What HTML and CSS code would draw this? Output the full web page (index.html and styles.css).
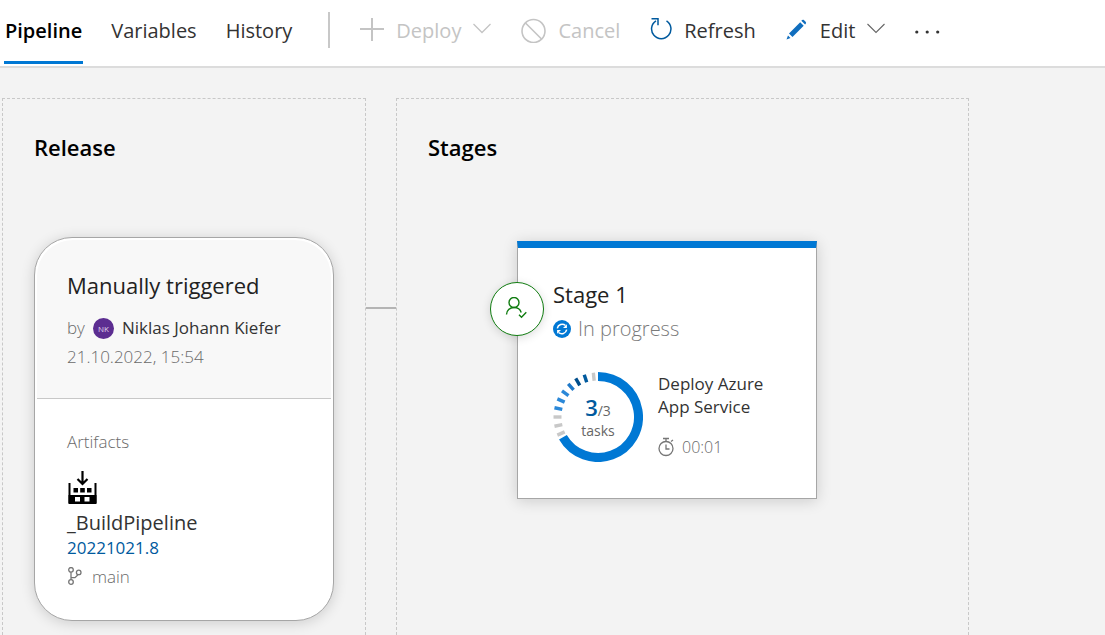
FILE: index.html
```html
<!DOCTYPE html>
<html lang="en">
<head>
<meta charset="utf-8">
<title>Release pipeline</title>
<link rel="stylesheet" href="styles.css">
</head>
<body>
<header class="toolbar">
  <nav class="tabs">
    <a class="tab tab-active" href="#pipeline">Pipeline</a>
    <a class="tab" href="#variables">Variables</a>
    <a class="tab" href="#history">History</a>
  </nav>
  <div class="actions">
    <button class="action" type="button" disabled>
      <svg width="24" height="24" viewBox="0 0 24 24"><path d="M12 -1v24M0 11h24" stroke-width="2"/></svg>
      <span>Deploy</span>
      <svg width="18" height="24" viewBox="0 0 18 24"><path d="M.5 6 9 14.500 17.500 6" stroke-width="1.300"/></svg>
    </button>
    <button class="action" type="button" disabled>
      <svg width="25" height="26" viewBox="0 0 25 26"><circle cx="12.500" cy="14" r="11.500" stroke-width="1.600"/><path d="m4.500 6 16 16" stroke-width="1.600"/></svg>
      <span>Cancel</span>
    </button>
    <button class="action" type="button">
      <svg class="blue" width="22" height="24" viewBox="0 0 22 24"><path d="M6 2.800A9.700 9.700 0 1 0 16.500 2.800M1.500 .8H8v6.500" stroke-width="1.500"/></svg>
      <span>Refresh</span>
    </button>
    <button class="action" type="button">
      <svg class="blue-fill" width="22" height="22" viewBox="0 0 22 22"><path d="m.5 20.500 1.500-4 2.500 2.500zM3 14.500 14.200 3.300l3.500 3.500L6.500 18zM15.300 1.800c1-1 1.800-1.300 2.800-.5l1.500 1.500c.8.900.6 1.800-.5 2.800z"/></svg>
      <span>Edit</span>
      <svg class="thin" width="18" height="24" viewBox="0 0 18 24"><path d="M.5 6 9 14.500 17.500 6" stroke-width="1.100"/></svg>
    </button>
    <button class="action" type="button" aria-label="More actions">
      <svg class="dots" width="25" height="24" viewBox="0 0 25 24"><circle cx="1.800" cy="14" r="1.600"/><circle cx="12.200" cy="14" r="1.600"/><circle cx="22.700" cy="14" r="1.600"/></svg>
    </button>
  </div>
</header>
<main class="canvas">
  <section class="lane lane-release">
    <h2 class="lane-title">Release</h2>
    <article class="release-card">
      <div class="trigger">
        <h3 class="card-title">Manually triggered</h3>
        <p class="author"><span class="muted">by</span><span class="avatar">NK</span><span>Niklas Johann Kiefer</span></p>
        <p class="muted date">21.10.2022, 15:54</p>
      </div>
      <div class="artifacts">
        <p class="muted">Artifacts</p>
        <svg class="build-icon" width="30" height="34" viewBox="0 0 30 34">
          <path d="M2.500 12v20M28.500 12v20" stroke="#000" stroke-width="2"/>
          <path d="M15.500 0v13M10.500 8l5 5 5-5" fill="none" stroke="#000" stroke-width="2.200"/>
          <path d="M6.500 17H11v4.500H6.500zM13.200 17h4.600v4.500h-4.600zM20 17h4.500v4.500H20z"/>
          <path fill-rule="evenodd" d="M1.500 24h28v9h-28zM8 26v4.500h5V26zM17.500 26v4.500h5V26z"/>
        </svg>
        <p class="artifact-name">_BuildPipeline</p>
        <a class="build-link" href="#build">20221021.8</a>
        <p class="muted branch">
          <svg width="16" height="20" viewBox="0 0 16 20" fill="none" stroke="#767676" stroke-width="1.300"><circle cx="4" cy="2.800" r="2.300"/><circle cx="4" cy="15" r="2.300"/><circle cx="11.700" cy="5.400" r="2.300"/><path d="M4 5.200v7.500M4 10.700h4l3-3"/></svg>
          <span>main</span>
        </p>
      </div>
    </article>
  </section>
  <div class="connector"></div>
  <section class="lane lane-stages">
    <h2 class="lane-title">Stages</h2>
    <article class="stage-card">
      <button class="approval" type="button" aria-label="Pre-deployment approvals">
        <svg width="24" height="24" viewBox="0 0 24 24" fill="none" stroke="#107c10" stroke-width="1.400"><circle cx="9" cy="5.500" r="5"/><path d="M1.500 17.500c0-4.200 3.300-7 7.500-7 3.400 0 6.300 1.900 7.200 5M14 17.800l2.500 2.500 4.800-5"/></svg>
      </button>
      <h3 class="card-title">Stage 1</h3>
      <p class="status">
        <svg width="18" height="18" viewBox="0 0 18 18"><circle cx="9" cy="9" r="9" fill="#0078d4"/><path d="M4.300 8.300a5 5 0 0 1 8.200-2.800M13.700 9.700a5 5 0 0 1-8.200 2.800" fill="none" stroke="#fff" stroke-width="1.500"/><path d="M13.900 4.200v3.900H10zM4.100 13.800V9.900H8z" fill="#fff"/></svg>
        <span>In progress</span>
      </p>
      <div class="progress-row">
        <div class="ring">
          <svg class="ring-art" width="90" height="90" viewBox="-45 -45 90 90" fill="none" stroke="#c8c8c8" stroke-width="3.400">
            <path d="M0-40.500A40.500 40.500 0 1 1-35.070 20.250" stroke="#0078d4" stroke-width="9"/>
            <path d="M0-36.500v-8" transform="rotate(246)"/>
            <path d="M0-36.500v-8" transform="rotate(258)"/>
            <path d="M0-36.500v-8" transform="rotate(270)"/>
            <path d="M0-36.500v-8" transform="rotate(282)" stroke="#2b88d8"/>
            <path d="M0-36.500v-8" transform="rotate(294)" stroke="#2b88d8"/>
            <path d="M0-36.500v-8" transform="rotate(306)" stroke="#2b88d8"/>
            <path d="M0-36.500v-8" transform="rotate(318)" stroke="#1e78c8"/>
            <path d="M0-36.500v-8" transform="rotate(330)" stroke="#004e8c"/>
            <path d="M0-36.500v-8" transform="rotate(342)" stroke="#005a9e"/>
            <path d="M0-36.500v-8" transform="rotate(354)"/>
          </svg>
          <p class="count"><strong>3</strong>/3</p>
          <p class="count-label">tasks</p>
        </div>
        <div class="task">
          <p class="task-name">Deploy Azure App Service</p>
          <p class="muted elapsed">
            <svg width="17" height="20" viewBox="0 0 17 20" fill="none" stroke="#767676" stroke-width="1.300"><circle cx="8" cy="11.500" r="7"/><path d="M5 1.500h6M8 1.500v3M13 4.500l2-1.500M8 7.500V12h3.500"/></svg>
            <span>00:01</span>
          </p>
        </div>
      </div>
    </article>
  </section>
</main>
</body>
</html>
```
FILE: styles.css
```css
* { box-sizing: border-box; }

body {
  margin: 0;
  min-height: 100vh;
  display: flex;
  flex-direction: column;
  background: #f3f3f3;
  color: #333;
  font-family: "Open Sans", "Noto Sans", sans-serif;
  font-size: 17px;
  line-height: 24px;
}

h2, h3, p { margin: 0; }

button {
  font: inherit;
  color: inherit;
  background: none;
  border: 0;
  padding: 0;
}

a { text-decoration: none; }

.toolbar {
  display: flex;
  height: 68px;
  background: #fff;
  border-bottom: 2px solid #dcdcdc;
  font-size: 20px;
}

.tabs {
  display: flex;
  gap: 27px;
  padding-left: 4px;
}

.tab {
  height: 64px;
  padding: 0 1px;
  line-height: 62px;
  color: #333;
}

.tab-active {
  color: #000;
  font-weight: 600;
  border-bottom: 3px solid #0078d4;
}

.actions {
  display: flex;
  align-items: center;
  height: 60px;
  gap: 30px;
  padding-left: 35px;
}

.actions::before {
  content: "";
  width: 2px;
  height: 36px;
  background: #c8c8c8;
}

.action {
  display: flex;
  align-items: center;
  gap: 12px;
  height: 60px;
  line-height: 60px;
}

.action span { padding-top: 1px; }

.action svg {
  flex: none;
  fill: none;
  stroke: currentColor;
}

.action:disabled { color: #c4c4c4; }
.action .blue { stroke: #005a9e; }
.action .blue-fill { fill: #106ebe; stroke: none; }
.action .thin { stroke: #666; }
.action .dots { fill: #333; stroke: none; }

.canvas {
  flex: 1;
  display: flex;
  padding: 30px 0 0 2px;
}

.lane {
  border: 1px dashed #c8c8c8;
  border-bottom: 0;
  padding: 32px 31px 14px;
}

.lane-release {
  flex: 0 0 363px;
}

.lane-stages { flex: 0 1 573px; }

.lane-title {
  color: #000;
  font-size: 22px;
  font-weight: 600;
  line-height: 32px;
}

.connector {
  flex: 0 0 30px;
  height: 2px;
  margin-top: 209px;
  background: #b4b4b4;
}

.release-card {
  width: 300px;
  margin-top: 74px;
  padding: 2px;
  background: #fff;
  border: 1px solid #a6a6a6;
  border-radius: 38px;
  box-shadow: 0 2px 14px rgba(0, 0, 0, 0.16);
}

.trigger {
  padding: 29px 30px;
  background: #f8f8f8;
  border-bottom: 1px solid #c8c8c8;
  border-radius: 36px 36px 0 0;
}

.card-title {
  color: #222;
  font-size: 22px;
  font-weight: 380;
  line-height: 32px;
}

.muted {
  color: #6a6a6a;
  font-weight: 320;
}

.author {
  display: flex;
  align-items: center;
  gap: 8px;
  margin-top: 15px;
}

.avatar {
  width: 21px;
  height: 21px;
  border-radius: 50%;
  background: #5c2d91;
  color: #e0d4ec;
  font-size: 8px;
  line-height: 21px;
  text-align: center;
}

.date { margin-top: 5px; }

.artifacts { padding: 31px 30px 29px; }

.build-icon {
  display: block;
  margin-top: 17px;
}

.artifact-name {
  margin-top: 5px;
  font-size: 20px;
  line-height: 26px;
}

.build-link {
  display: block;
  color: #005a9e;
}

.branch {
  display: flex;
  align-items: center;
  gap: 9px;
  margin-top: 5px;
}

.stage-card {
  position: relative;
  width: 300px;
  margin: 78px auto 0 89px;
  padding: 30px 35px 36px;
  background: #fff;
  border: 1px solid #a6a6a6;
  border-top: 7px solid #0078d4;
  box-shadow: 0 2px 14px rgba(0, 0, 0, 0.16);
}

.approval {
  position: absolute;
  left: -28px;
  top: 34px;
  width: 54px;
  height: 54px;
  display: flex;
  align-items: center;
  justify-content: center;
  background: #fff;
  border: 1px solid #107c10;
  border-radius: 50%;
  box-shadow: 0 2px 10px rgba(0, 0, 0, 0.14);
}

.status {
  display: flex;
  align-items: center;
  gap: 7px;
  margin-top: 5px;
  color: #7a7a7a;
  font-size: 20px;
  font-weight: 320;
  line-height: 28px;
}

.progress-row {
  display: flex;
  gap: 15px;
  margin-top: 29px;
}

.ring {
  position: relative;
  flex: none;
  width: 90px;
  height: 90px;
  padding-top: 23px;
  color: #666;
  font-size: 14px;
  text-align: center;
}

.ring-art {
  position: absolute;
  inset: 0;
}

.count { line-height: 24px; }

.count strong {
  color: #005a9e;
  font-size: 22px;
  font-weight: 600;
}

.count-label { line-height: 16px; }

.task-name { line-height: 23px; }

.elapsed {
  display: flex;
  align-items: center;
  gap: 7px;
  margin-top: 17px;
  font-size: 16px;
}
```
